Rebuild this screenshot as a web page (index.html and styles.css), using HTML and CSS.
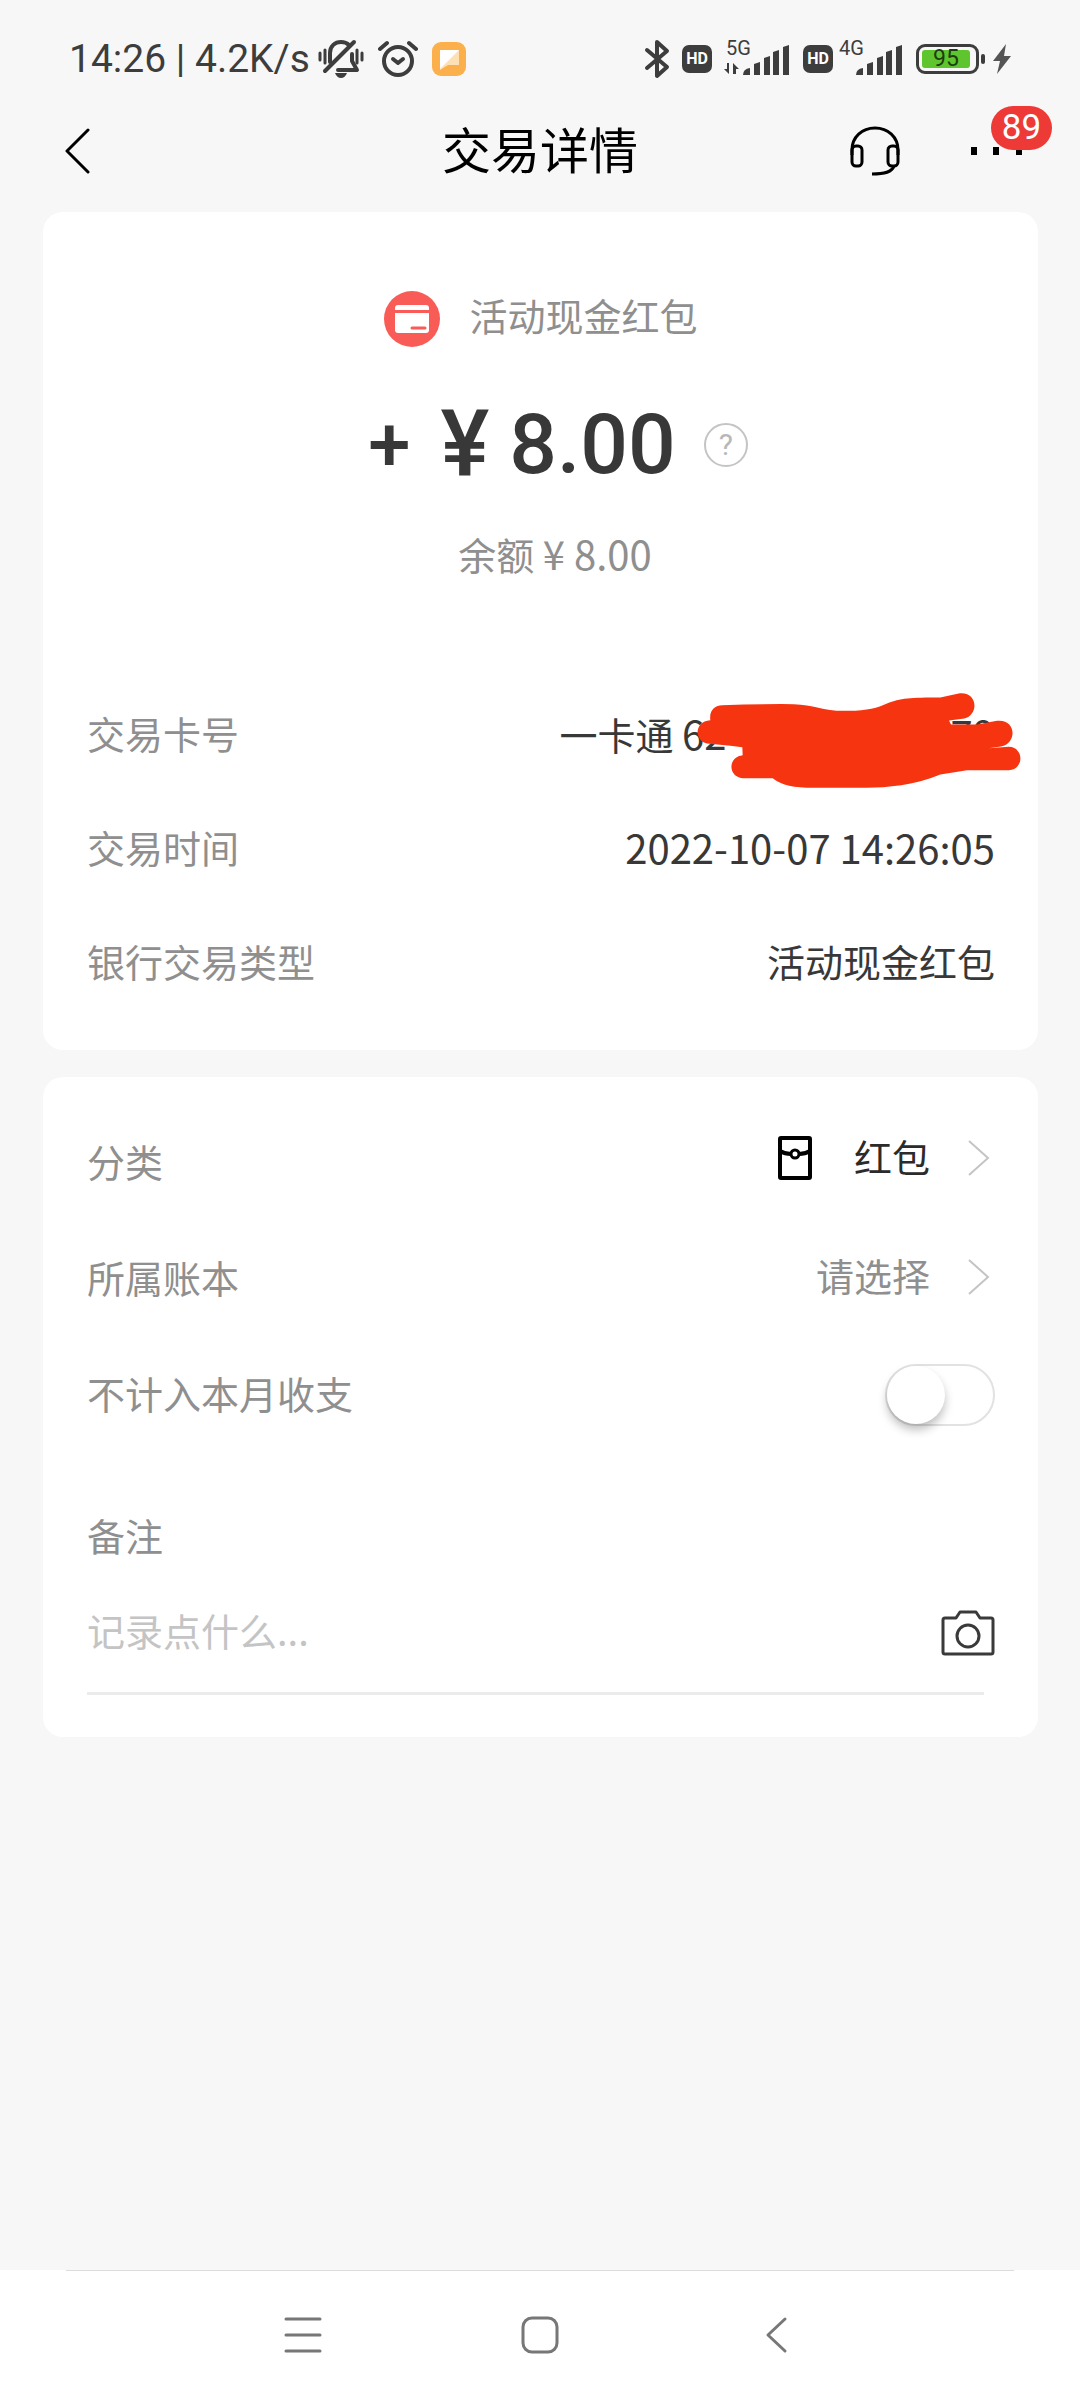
FILE: index.html
```html
<!DOCTYPE html>
<html lang="zh-CN">
<head>
  <meta charset="UTF-8" />
  <meta name="viewport" content="width=device-width, initial-scale=1" />
  <title>交易详情</title>
  <link rel="stylesheet" href="styles.css">
</head>
<body>
  <div class="status-bar">
    <div class="status-left">
      <span class="clock">14:26 | 4.2K/s</span>
      <svg class="icon-mute" width="46" height="40" viewBox="0 0 46 40" fill="none" stroke="#3d3d3d" stroke-width="4" stroke-linecap="round">
        <path d="M2 14v7M7 11v13M39 11v13M44 14v7" stroke-width="3" />
        <path d="M12 23V14C12 7 17 3 23 3c3 0 6 1 8 3M34 15v7l5 9H20" stroke-linejoin="round" />
        <path d="M36 3L7 32" />
        <path d="M17 34h12q-2 5-6 5t-6-5z" fill="#3d3d3d" stroke="none" />
      </svg>
      <svg class="icon-alarm" width="40" height="38" viewBox="0 0 40 38" fill="none" stroke="#3d3d3d" stroke-width="4" stroke-linecap="round">
        <circle cx="20" cy="21" r="14" />
        <path d="M2 9l7-6M38 9l-7-6" />
        <path d="M15 19l5 4 5-4" stroke-linejoin="round" />
      </svg>
      <svg width="34" height="34" viewBox="0 0 34 34">
        <rect width="34" height="34" rx="9" fill="#fbb04c" />
        <path d="M8 8h19v15H16l-8 5z" fill="#fde0b3" />
        <path d="M8 8h19L8 27z" fill="#fff" />
      </svg>
    </div>
    <div class="status-right">
      <svg width="26" height="40" viewBox="0 0 26 40" fill="none" stroke="#3d3d3d" stroke-width="4" stroke-linejoin="round" stroke-linecap="round">
        <path d="M3 11l20 17-10 9V3l10 9L3 29" />
      </svg>
      <span class="hd">HD</span>
      <svg width="67" height="50" viewBox="0 -6 67 50" fill="#3d3d3d">
        <text x="2" y="15" class="net">5G</text>
        <path d="M5 23v11l-5-5h3v-6zM9 34V23l6 6h-3v5z" />
        <path d="M19 35q0-6 7-7v7zM30 35V24l6-2v13zM40 35V18l6-2v19zM49 35V12l6-2v25zM59 35V7l6-2v30z" />
      </svg>
      <span class="hd">HD</span>
      <svg class="signal-4g" width="65" height="50" viewBox="0 -6 65 50" fill="#3d3d3d">
        <text x="0" y="15" class="net">4G</text>
        <path d="M17 35q0-6 7-7v7zM28 35V24l6-2v13zM38 35V18l6-2v19zM47 35V12l6-2v25zM57 35V7l6-2v30z" />
      </svg>
      <div class="battery"><span class="battery-level">95</span></div>
      <svg width="18" height="32" viewBox="0 0 18 32">
        <path d="M13 1L0 18h7L4 31 18 13h-7z" fill="#555" />
      </svg>
    </div>
  </div>

  <header class="header">
    <button class="icon-btn back" aria-label="返回">
      <svg width="26" height="48" viewBox="0 0 26 48" fill="none" stroke="#000" stroke-width="3" stroke-linecap="round" stroke-linejoin="round">
        <path d="M24 3L3 24l21 21" />
      </svg>
    </button>
    <h1 class="title">交易详情</h1>
    <div class="header-actions">
      <button class="icon-btn" aria-label="客服">
        <svg width="50" height="50" viewBox="0 0 50 50" fill="none" stroke="#000" stroke-width="3">
          <path d="M2 29v-5C2 11 12 2 25 2s23 9 23 22v5M44 40c-2 6-9 8-22 8" />
          <rect x="2" y="20" width="10" height="20" rx="4" />
          <rect x="38" y="20" width="10" height="20" rx="4" />
        </svg>
      </button>
      <button class="icon-btn more" aria-label="更多">
        <svg width="51" height="8" viewBox="0 0 51 8">
          <path d="M0 0h6v8H0zM22 0h6v8h-6zM45 0h6v8h-6z" />
        </svg>
        <span class="badge">89</span>
      </button>
    </div>
  </header>

  <main class="content">
    <section class="card">
      <div class="source">
        <svg width="56" height="56" viewBox="0 0 56 56">
          <circle cx="28" cy="28" r="28" fill="#f95b57" />
          <path d="M11 19v-2q0-3 3-3h28q3 0 3 3v2z" fill="#fff" />
          <path d="M11 22h34v17q0 3-3 3H14q-3 0-3-3z" fill="#fff" />
          <path d="M28 37h13" stroke="#f95b57" stroke-width="3" stroke-linecap="round" />
        </svg>
        <span>活动现金红包</span>
      </div>
      <div class="amount">
        <span class="sign">+</span>
        <span class="yen">¥</span>
        <span>8.00</span>
        <button class="help" aria-label="说明">?</button>
      </div>
      <div class="balance">余额 <span class="num">¥ 8.00</span></div>

      <dl class="details">
        <div class="row">
          <dt>交易卡号</dt>
          <dd>一卡通 <span class="num">62************79</span></dd>
          <svg class="scribble" width="325" height="97" viewBox="500 68 975 290" fill="#f63410">
            <path d="M575 107Q700 103 790 104C850 105 880 125 945 124C1010 125 1040 115 1070 102C1110 86 1140 84 1230 84L1285 72C1345 65 1345 138 1302 147L1256 153L1262 165H1340L1400 154C1460 148 1460 224 1412 231L1375 236L1435 232C1482 233 1482 300 1435 302H1310L1230 315C1150 348 1070 354 1010 355H850C790 354 755 348 727 326H637C592 322 592 262 637 257L636 233L600 229L530 222C492 215 490 155 540 152C536 120 555 108 575 107Z" />
          </svg>
        </div>
        <div class="row">
          <dt>交易时间</dt>
          <dd class="num">2022-10-07 14:26:05</dd>
        </div>
        <div class="row">
          <dt>银行交易类型</dt>
          <dd>活动现金红包</dd>
        </div>
      </dl>
    </section>

    <section class="card card-form">
      <button class="row">
        <span class="label">分类</span>
        <span class="pick dark">
          <svg width="34" height="44" viewBox="0 0 34 44" fill="none" stroke="#000" stroke-width="4">
            <rect x="2" y="2" width="30" height="40" rx="1" />
            <path d="M2 15q5 3 11 3M32 15q-5 3-11 3" />
            <circle cx="17" cy="18" r="4" stroke-width="3" />
          </svg>
          <span class="pick-text">红包</span>
          <svg class="arrow" width="22" height="38" viewBox="0 0 22 38"><path d="M1 2l19 17L1 36" /></svg>
        </span>
      </button>
      <button class="row">
        <span class="label">所属账本</span>
        <span class="pick">
          <span class="pick-text">请选择</span>
          <svg class="arrow" width="22" height="38" viewBox="0 0 22 38"><path d="M1 2l19 17L1 36" /></svg>
        </span>
      </button>
      <div class="row">
        <label class="label" for="exclude">不计入本月收支</label>
        <input class="switch" type="checkbox" id="exclude" />
      </div>
      <label class="note-label" for="note">备注</label>
      <div class="note">
        <input type="text" id="note" placeholder="记录点什么..." />
        <button class="icon-btn" aria-label="添加照片">
          <svg width="54" height="46" viewBox="0 0 54 46" fill="none" stroke="#3a3a3a" stroke-width="3" stroke-linejoin="round">
            <path d="M4 8h11l4-6h16l4 6h11q2 0 2 2v32q0 2-2 2H4q-2 0-2-2V10q0-2 2-2z" />
            <circle cx="27" cy="26" r="11" />
          </svg>
        </button>
      </div>
    </section>
  </main>

  <nav class="nav-bar">
    <button class="icon-btn" aria-label="最近任务">
      <svg width="38" height="38" viewBox="0 0 38 38" fill="none" stroke="#777" stroke-width="3" stroke-linecap="round"><path d="M2 3h34M2 19h34M2 35h34" /></svg>
    </button>
    <button class="icon-btn" aria-label="主页">
      <svg width="38" height="38" viewBox="0 0 38 38" fill="none" stroke="#777" stroke-width="3"><rect x="2" y="2" width="34" height="34" rx="9" /></svg>
    </button>
    <button class="icon-btn" aria-label="返回上一级">
      <svg width="38" height="38" viewBox="0 0 38 38" fill="none" stroke="#777" stroke-width="3" stroke-linecap="round" stroke-linejoin="round"><path d="M27 3L10 19l17 16" /></svg>
    </button>
  </nav>
</body>
</html>
```
FILE: styles.css
```css
* {
  box-sizing: border-box;
}
body {
  margin: 0;
  min-height: 100vh;
  display: flex;
  flex-direction: column;
  background: #f7f7f7;
  color: #383838;
  font-family: "Noto Sans CJK SC", "Noto Sans", sans-serif;
  font-size: 38px;
  line-height: 56px;
}
button,
input {
  font: inherit;
  color: inherit;
  border: none;
  background: none;
  padding: 0;
  margin: 0;
}
button {
  cursor: pointer;
}
svg {
  display: block;
  flex: none;
}
.num {
  font-size: 40px;
}

/* status bar */
.status-bar {
  display: flex;
  justify-content: space-between;
  align-items: center;
  height: 98px;
  padding: 20px 69px 0;
  color: #3d3d3d;
}
.status-left,
.status-right {
  display: flex;
  align-items: center;
}
.status-left {
  gap: 14px;
}
.status-right {
  gap: 12px;
}
.clock {
  font-family: Roboto, sans-serif;
  font-size: 39px;
  white-space: nowrap;
}
.icon-mute {
  margin-left: -6px;
}
.hd {
  width: 30px;
  height: 28px;
  border-radius: 7px;
  background: #3d3d3d;
  color: #fff;
  font: 700 16px/28px Roboto, sans-serif;
  text-align: center;
}
.net {
  font: 400 20px Roboto, sans-serif;
}
.signal-4g {
  margin-left: -6px;
}
.battery {
  position: relative;
  width: 63px;
  height: 30px;
  padding: 3px;
  border: 3px solid #3d3d3d;
  border-radius: 9px;
  margin-right: 2px;
}
.battery::after {
  content: "";
  position: absolute;
  right: -9px;
  top: 7px;
  width: 4px;
  height: 10px;
  border-radius: 2px;
  background: #3d3d3d;
}
.battery-level {
  display: block;
  width: 48px;
  border-radius: 3px;
  background: #5fc52e;
  color: #1d3d10;
  font: 400 23px/18px Roboto, sans-serif;
  text-align: center;
}

/* page header */
.header {
  display: grid;
  grid-template-columns: 1fr auto 1fr;
  align-items: center;
  height: 106px;
  padding: 0 58px;
  color: #000;
}
.back {
  justify-self: start;
  padding-left: 6px;
}
.title {
  margin: 0;
  padding-bottom: 6px;
  font-size: 49px;
  font-weight: 400;
}
.header-actions {
  display: flex;
  justify-content: flex-end;
  align-items: center;
  gap: 71px;
}
.more {
  position: relative;
}
.badge {
  position: absolute;
  left: 20px;
  bottom: 5px;
  width: 61px;
  height: 44px;
  border-radius: 22px;
  background: #ee3a36;
  color: #fff;
  font: 400 35px/44px Roboto, sans-serif;
}

/* cards */
.content {
  display: flex;
  flex-direction: column;
  gap: 27px;
  padding: 8px 42px 8px 43px;
}
.card {
  padding: 75px 43px 32px 44px;
  border-radius: 20px;
  background: #fff;
  color: #8f8f8f;
}
.source {
  display: flex;
  justify-content: center;
  align-items: center;
  gap: 29px;
}
.source span {
  padding-bottom: 8px;
}
.amount {
  display: flex;
  justify-content: center;
  align-items: center;
  gap: 20px;
  margin: 44px 0 30px;
  padding-left: 34px;
  color: #383838;
  font: 500 84px/100px Roboto, sans-serif;
}
.sign {
  font-size: 76px;
}
.yen {
  margin-left: 10px;
  font-size: 92px;
}
.help {
  width: 44px;
  height: 44px;
  margin-left: 8px;
  border: 2px solid #c4c4c4;
  border-radius: 50%;
  color: #b8b8b8;
  font: 400 30px/40px Roboto, sans-serif;
}
.balance {
  padding-left: 28px;
  text-align: center;
}
.details {
  margin: 94px 0 0;
}
.row {
  position: relative;
  display: flex;
  justify-content: space-between;
  align-items: center;
  width: 100%;
  height: 114px;
}
.row dd {
  margin: 0;
  color: #383838;
}
.scribble {
  position: absolute;
  top: 16px;
  right: -27px;
}

.card-form {
  padding-top: 28px;
  padding-bottom: 42px;
}
.card-form .row {
  height: 116px;
}
.label {
  padding-bottom: 4px;
}
.pick {
  display: flex;
  align-items: center;
  padding-bottom: 4px;
}
.pick-text {
  margin: 0 38px 0 42px;
  padding-bottom: 4px;
}
.dark {
  padding-bottom: 10px;
  color: #2b2b2b;
}
.arrow {
  margin-right: 5px;
  fill: none;
  stroke: #c4c4c4;
  stroke-width: 2;
}
.switch {
  appearance: none;
  width: 110px;
  height: 62px;
  border: 2px solid #e2e2e2;
  border-radius: 31px;
  cursor: pointer;
}
.switch::before {
  content: "";
  display: block;
  width: 58px;
  height: 58px;
  border-radius: 50%;
  background: #fff;
  box-shadow: 0 6px 10px rgba(0, 0, 0, 0.25);
}
.switch:checked {
  background: #5fc52e;
}
.switch:checked::before {
  margin-left: 48px;
}
.note-label {
  display: block;
  margin-top: 54px;
}
.note {
  display: flex;
  align-items: center;
  justify-content: space-between;
  height: 132px;
  padding-top: 8px;
  position: relative;
}
.note::after {
  content: "";
  position: absolute;
  left: 0;
  right: 11px;
  bottom: 0;
  height: 3px;
  background: #ebebeb;
}
.note input {
  flex: 1;
  min-width: 0;
  padding-bottom: 6px;
  outline: none;
}
.note input::placeholder {
  color: #c4c4c4;
}

/* system navigation */
.nav-bar {
  position: relative;
  display: flex;
  justify-content: center;
  align-items: center;
  gap: 199px;
  height: 130px;
  margin-top: auto;
  background: #fff;
}
.nav-bar::before {
  content: "";
  position: absolute;
  top: 0;
  left: 66px;
  right: 66px;
  height: 1px;
  background: #ddd;
}
```
